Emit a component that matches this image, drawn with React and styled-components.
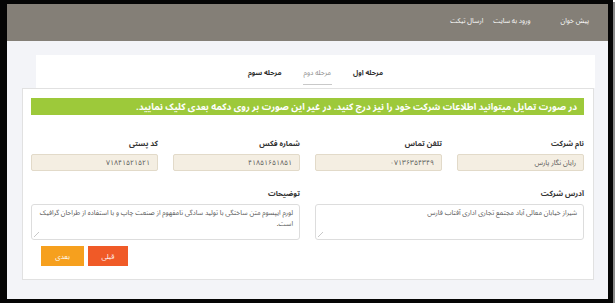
import styled, {createGlobalStyle} from 'styled-components';

const GlobalStyle = createGlobalStyle`
    html, body {
        margin: 0;
        padding: 0;
        background: #ffffff;
    }
    body {
        font-family: "Noto Sans Arabic", "DejaVu Sans", "Noto Sans", sans-serif;
    }
    * {
        box-sizing: border-box;
    }
`;

const Frame = styled.div`
    width: 613px;
    height: 303px;
    border-style: solid;
    border-color: #050505;
    border-width: 4px 5px 4px 7px;
    box-shadow: 2px 2px 0 #8a8a8a;
    background: #f3f4f8;
    display: flex;
    flex-direction: column;
    overflow: hidden;
`;

const Header = styled.div`
    height: 37px;
    flex-shrink: 0;
    background: #847f77;
    display: flex;
    direction: rtl;
    align-items: center;
    padding-right: 19px;
`;

const NavLink = styled.a`
    color: #ffffff;
    font-size: 6.8px;
    text-decoration: none;
    margin-left: ${p => p.$space}px;
    margin-top: -3px;
`;

const Steps = styled.div`
    margin: 14px 13px 0 29px;
    height: 33px;
    flex-shrink: 0;
    background: #ffffff;
    display: flex;
    direction: rtl;
    justify-content: center;
    align-items: center;
    gap: 20px;
`;

const Step = styled.span`
    font-size: 7px;
    font-weight: ${p => p.$active ? 400 : 700};
    color: ${p => p.$active ? '#8a8a8a' : '#2e2e2e'};
    padding: 3px 1px 4px;
    border-bottom: 1px solid ${p => p.$active ? '#c9c9c9' : 'transparent'};
    margin-top: 3px;
`;

const Card = styled.div`
    margin: 0 14px 0 15px;
    height: 192px;
    flex-shrink: 0;
    background: #ffffff;
    border: 1px solid #e1e1e1;
    padding: 9px 9px 0 8px;
    direction: rtl;
`;

const Banner = styled.div`
    height: 17px;
    background: #9dc93a;
    color: #ffffff;
    font-size: 9.3px;
    font-weight: 700;
    display: flex;
    align-items: center;
    padding-right: 7px;
    white-space: nowrap;
`;

const Grid = styled.div`
    display: grid;
    grid-template-columns: repeat(${p => p.$cols}, 1fr);
    column-gap: 15px;
    margin-top: ${p => p.$top}px;
`;

const Field = styled.div`
    display: flex;
    flex-direction: column;
`;

const Label = styled.label`
    font-size: 7.5px;
    font-weight: 700;
    color: #333333;
    height: 12px;
    margin-bottom: 6px;
`;

const Input = styled.div`
    height: 17px;
    background: #f4eee2;
    border: 1px solid #e2dac9;
    border-radius: 2px;
    font-size: 7px;
    color: #555555;
    display: flex;
    align-items: center;
    padding-right: 7px;
`;

const TextBox = styled.div`
    position: relative;
    height: 36px;

    &::after {
        content: "";
        position: absolute;
        left: 3px;
        bottom: 3px;
        width: 5px;
        height: 5px;
        background: linear-gradient(45deg, transparent 45%, #c8c8c8 45%, #c8c8c8 55%, transparent 55%);
        transform: scaleX(-1);
    }
`;

const TextArea = styled.textarea`
    display: block;
    width: 100%;
    height: 36px;
    border: 1px solid #dddddd;
    border-radius: 3px;
    background: #ffffff;
    font-family: inherit;
    font-size: 6.8px;
    line-height: 11px;
    color: #555555;
    padding: 3px 6px;
    margin: 0;
    direction: rtl;
    resize: none;
    outline: none;
`;

const Actions = styled.div`
    direction: ltr;
    display: flex;
    gap: 4px;
    padding-left: 10px;
    margin-top: 6px;
`;

const Button = styled.button`
    width: ${p => p.$w}px;
    height: 20px;
    border: none;
    border-radius: 0;
    background: ${p => p.$bg};
    color: #ffffff;
    font-family: inherit;
    font-size: 7px;
    padding: 0;
`;

export default function App() {
    return (
        <>
            <GlobalStyle/>
            <Frame>
                <Header>
                    <NavLink $space={30}>پیش خوان</NavLink>
                    <NavLink $space={10}>ورود به سایت</NavLink>
                    <NavLink $space={0}>ارسال تیکت</NavLink>
                </Header>
                <Steps>
                    <Step>مرحله اول</Step>
                    <Step $active>مرحله دوم</Step>
                    <Step>مرحله سوم</Step>
                </Steps>
                <Card>
                    <Banner>در صورت تمایل میتوانید اطلاعات شرکت خود را نیز درج کنید. در غیر این صورت بر روی دکمه بعدی کلیک نمایید.</Banner>
                    <Grid $cols={4} $top={21}>
                        <Field>
                            <Label>نام شرکت</Label>
                            <Input>رایان نگار پارس</Input>
                        </Field>
                        <Field>
                            <Label>تلفن تماس</Label>
                            <Input>۰۷۱۳۶۳۵۴۳۴۹</Input>
                        </Field>
                        <Field>
                            <Label>شماره فکس</Label>
                            <Input>۴۱۸۵۱۶۵۱۸۵۱</Input>
                        </Field>
                        <Field>
                            <Label>کد پستی</Label>
                            <Input>۷۱۸۴۱۵۲۱۵۲۱</Input>
                        </Field>
                    </Grid>
                    <Grid $cols={2} $top={15}>
                        <Field>
                            <Label>آدرس شرکت</Label>
                            <TextBox>
                                <TextArea defaultValue="شیراز خیابان معالی آباد مجتمع تجاری اداری آفتاب فارس"/>
                            </TextBox>
                        </Field>
                        <Field>
                            <Label>توضیحات</Label>
                            <TextBox>
                                <TextArea defaultValue="لورم ایپسوم متن ساختگی با تولید سادگی نامفهوم از صنعت چاپ و با استفاده از طراحان گرافیک است."/>
                            </TextBox>
                        </Field>
                    </Grid>
                    <Actions>
                        <Button $w={43} $bg="#f6a01e">بعدی</Button>
                        <Button $w={40} $bg="#f05a27">قبلی</Button>
                    </Actions>
                </Card>
            </Frame>
        </>
    );
}
